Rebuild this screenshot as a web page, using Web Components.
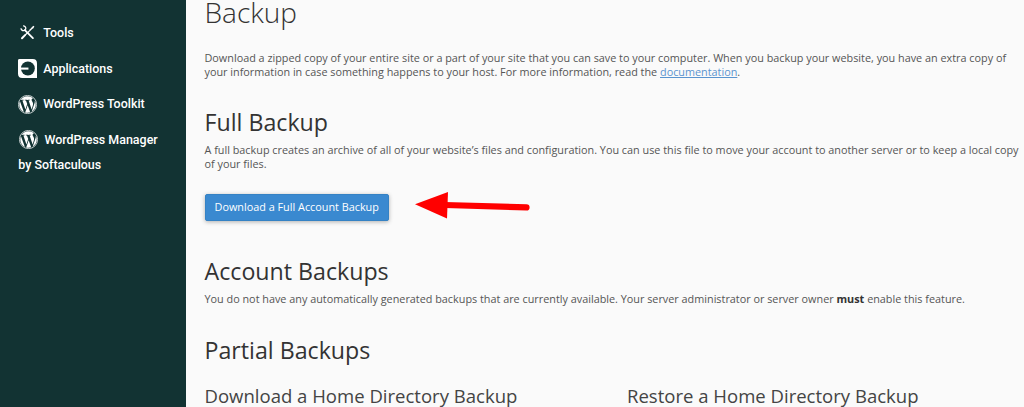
<!DOCTYPE html>
<html lang="en">
<head>
<meta charset="utf-8">
<title>Backup</title>
<style>
  html, body {
    margin: 0;
    height: 407px;
    overflow: hidden;
    background: #fafafa;
  }
</style>
</head>
<body>
<backup-page></backup-page>

<script>
const icons = {
  tools: `
    <svg viewBox="0 0 20 20">
      <path d="M5.4 3.1 A2.500 2.500 0 1 1 3.200 5.600" fill="none" stroke="#fff" stroke-width="1.4"/>
      <path d="M7.2 7.4 L15.7 15.9" stroke="#fff" stroke-width="1.9" stroke-linecap="round"/>
      <path d="M12 8.200 L15.800 4.400" stroke="#fff" stroke-width="1.500"/>
      <path d="M14.2 4.6 L16.6 3 L17.2 3.6 L15.8 6 Z" fill="#fff"/>
      <path d="M12 8.4 L7.6 12.6" stroke="#fff" stroke-width="1.2"/>
      <path d="M7.4 12.8 L4.2 16" stroke="#fff" stroke-width="2.1" stroke-linecap="round"/>
    </svg>`,
  apps: `
    <svg viewBox="0 0 20 20">
      <path d="M1.500 0 H15.500 Q20 0 20 4.500 V20 H4.500 Q0 20 0 15.500 V1.500 Q0 0 1.500 0 Z" fill="#fff"/>
      <circle cx="10.4" cy="10" r="7.300" fill="#123333"/>
      <path d="M0 9 H11 V11.200 H0 Z" fill="#fff"/>
    </svg>`,
  wordpress: `
    <svg viewBox="0 0 24 24">
      <circle cx="12" cy="12" r="11.500" fill="none" stroke="#fff" stroke-width="0.9"/>
      <path fill="#fff" transform="translate(0.4 0.4) scale(0.967)" d="M21.469 6.825c.84 1.537 1.318 3.3 1.318 5.175 0 3.979-2.156 7.456-5.363 9.325l3.295-9.527c.615-1.54.82-2.771.82-3.864 0-.405-.026-.78-.07-1.11m-7.981.105c.647-.03 1.232-.105 1.232-.105.582-.075.514-.93-.067-.899 0 0-1.755.135-2.88.135-1.064 0-2.85-.15-2.85-.15-.585-.03-.661.855-.075.885 0 0 .54.061 1.125.09l1.68 4.605-2.37 7.08L5.354 6.9c.649-.03 1.234-.1 1.234-.1.585-.075.516-.93-.065-.896 0 0-1.746.138-2.874.138-.2 0-.438-.008-.69-.015C4.911 3.15 8.235 1.215 12 1.215c2.809 0 5.365 1.072 7.286 2.833-.046-.003-.091-.009-.141-.009-1.06 0-1.812.923-1.812 1.914 0 .89.513 1.643 1.06 2.531.411.72.89 1.643.89 2.977 0 .915-.354 1.994-.821 3.479l-1.075 3.585-3.9-11.61.001.014zM12 22.784c-1.059 0-2.081-.153-3.048-.437l3.237-9.406 3.315 9.087c.024.053.05.101.078.149-1.12.393-2.325.609-3.582.609M1.211 12c0-1.564.336-3.05.935-4.39L7.29 21.709C3.694 19.96 1.212 16.271 1.211 12"/>
    </svg>`
};

class NavItem extends HTMLElement {
  constructor() {
    super();
    const shadow = this.attachShadow({ mode: 'open' });
    shadow.innerHTML = `
      <style>
        :host {
          display: block;
          color: #fff;
          font: 500 12.45px/24px Roboto, sans-serif;
        }
        .row {
          display: flex;
          align-items: center;
          gap: 6px;
          height: 24px;
          padding-left: var(--indent, 0px);
          white-space: nowrap;
        }
        svg {
          display: block;
          width: 19px;
          height: 19px;
        }
      </style>
      <div class="row">${icons[this.getAttribute('icon')]}<span><slot></slot></span></div>
      <slot name="more"></slot>
    `;
  }
}

class SideNav extends HTMLElement {
  constructor() {
    super();
    const shadow = this.attachShadow({ mode: 'open' });
    shadow.innerHTML = `
      <style>
        :host {
          display: flex;
          flex-direction: column;
          gap: 11.7px;
          box-sizing: border-box;
          width: 186px;
          padding: 20.9px 0 0 18.3px;
          background: #123333;
        }
        .softaculous {
          --indent: 1.2px;
        }
        .softaculous div {
          padding-top: 0.6px;
        }
      </style>
      <nav-item icon="tools">Tools</nav-item>
      <nav-item icon="apps">Applications</nav-item>
      <nav-item icon="wordpress">WordPress Toolkit</nav-item>
      <nav-item icon="wordpress" class="softaculous">WordPress Manager<div slot="more">by Softaculous</div></nav-item>
    `;
  }
}

// Heading with its explanation under it
class BackupSection extends HTMLElement {
  constructor() {
    super();
    const shadow = this.attachShadow({ mode: 'open' });
    shadow.innerHTML = `
      <style>
        :host {
          display: block;
        }
        h2 {
          margin: 0 0 6px;
          color: #333;
          font-size: 23.2px;
          font-weight: 400;
          line-height: 30px;
        }
        ::slotted(p) {
          margin: 0;
        }
      </style>
      <h2>${this.getAttribute('heading')}</h2>
      <slot></slot>
    `;
  }
}

class PrimaryButton extends HTMLElement {
  constructor() {
    super();
    const shadow = this.attachShadow({ mode: 'open' });
    shadow.innerHTML = `
      <style>
        :host {
          display: block;
        }
        button {
          display: block;
          box-sizing: border-box;
          width: 184.5px;
          height: 27px;
          padding: 0;
          border: 1px solid #3582c4;
          border-radius: 2px;
          background: #3a89d0;
          box-shadow: 0 1px 4px rgba(0, 0, 0, 0.3);
          color: #fff;
          font: inherit;
          white-space: nowrap;
        }
      </style>
      <button type="button"><slot></slot></button>
    `;
  }
}

class PointerArrow extends HTMLElement {
  constructor() {
    super();
    const shadow = this.attachShadow({ mode: 'open' });
    shadow.innerHTML = `
      <style>
        :host {
          display: block;
        }
        svg {
          display: block;
        }
      </style>
      <svg width="116" height="30" viewBox="0 0 116 30">
        <path d="M0 12.300 L33 0 L32 26.600 Z" fill="#f00"/>
        <path d="M30 9.900 L111.500 12.300 A3.100 3.100 0 0 1 111.500 18.500 L30 16.100 Z" fill="#f00"/>
      </svg>
    `;
  }
}

class BackupPage extends HTMLElement {
  constructor() {
    super();
    const shadow = this.attachShadow({ mode: 'open' });
    shadow.innerHTML = `
      <style>
        :host {
          display: flex;
          width: 1024px;
          height: 407px;
          overflow: hidden;
          color: #555;
          font: 10.83px/14px "Open Sans", sans-serif;
        }
        side-nav {
          flex: none;
        }
        main {
          flex: 1;
          padding-left: 18.5px;
          white-space: nowrap;
        }
        h1 {
          margin: -8px 0 19px;
          color: #333;
          font-size: 28px;
          font-weight: 300;
          line-height: 40px;
        }
        p {
          margin: 0;
        }
        a {
          color: #5a94cf;
        }
        strong {
          color: #333;
        }
        .full {
          margin-top: 28px;
        }
        .action {
          display: flex;
          gap: 26px;
          height: 28px;
          margin-top: 22px;
          align-items: center;
        }
        .account {
          margin-top: 35px;
        }
        .partial {
          margin-top: 29px;
        }
        .columns {
          display: grid;
          grid-template-columns: 422.5px 1fr;
          margin-top: 19px;
        }
        h3 {
          margin: 0;
          color: #444;
          font-size: 18.55px;
          font-weight: 400;
          line-height: 24px;
        }
      </style>
      <side-nav></side-nav>
      <main>
        <h1>Backup</h1>
        <p>Download a zipped copy of your entire site or a part of your site that you can save to your computer. When you backup your website, you have an extra copy of<br>your information in case something happens to your host. For more information, read the <a href="#">documentation</a>.</p>
        <backup-section class="full" heading="Full Backup">
          <p>A full backup creates an archive of all of your website’s files and configuration. You can use this file to move your account to another server or to keep a local copy<br>of your files.</p>
        </backup-section>
        <div class="action">
          <primary-button>Download a Full Account Backup</primary-button>
          <pointer-arrow></pointer-arrow>
        </div>
        <backup-section class="account" heading="Account Backups">
          <p>You do not have any automatically generated backups that are currently available. Your server administrator or server owner <strong>must</strong> enable this feature.</p>
        </backup-section>
        <backup-section class="partial" heading="Partial Backups">
          <div class="columns">
            <h3>Download a Home Directory Backup</h3>
            <h3>Restore a Home Directory Backup</h3>
          </div>
        </backup-section>
      </main>
    `;
  }
}

customElements.define('nav-item', NavItem);
customElements.define('side-nav', SideNav);
customElements.define('backup-section', BackupSection);
customElements.define('primary-button', PrimaryButton);
customElements.define('pointer-arrow', PointerArrow);
customElements.define('backup-page', BackupPage);
</script>
</body>
</html>
